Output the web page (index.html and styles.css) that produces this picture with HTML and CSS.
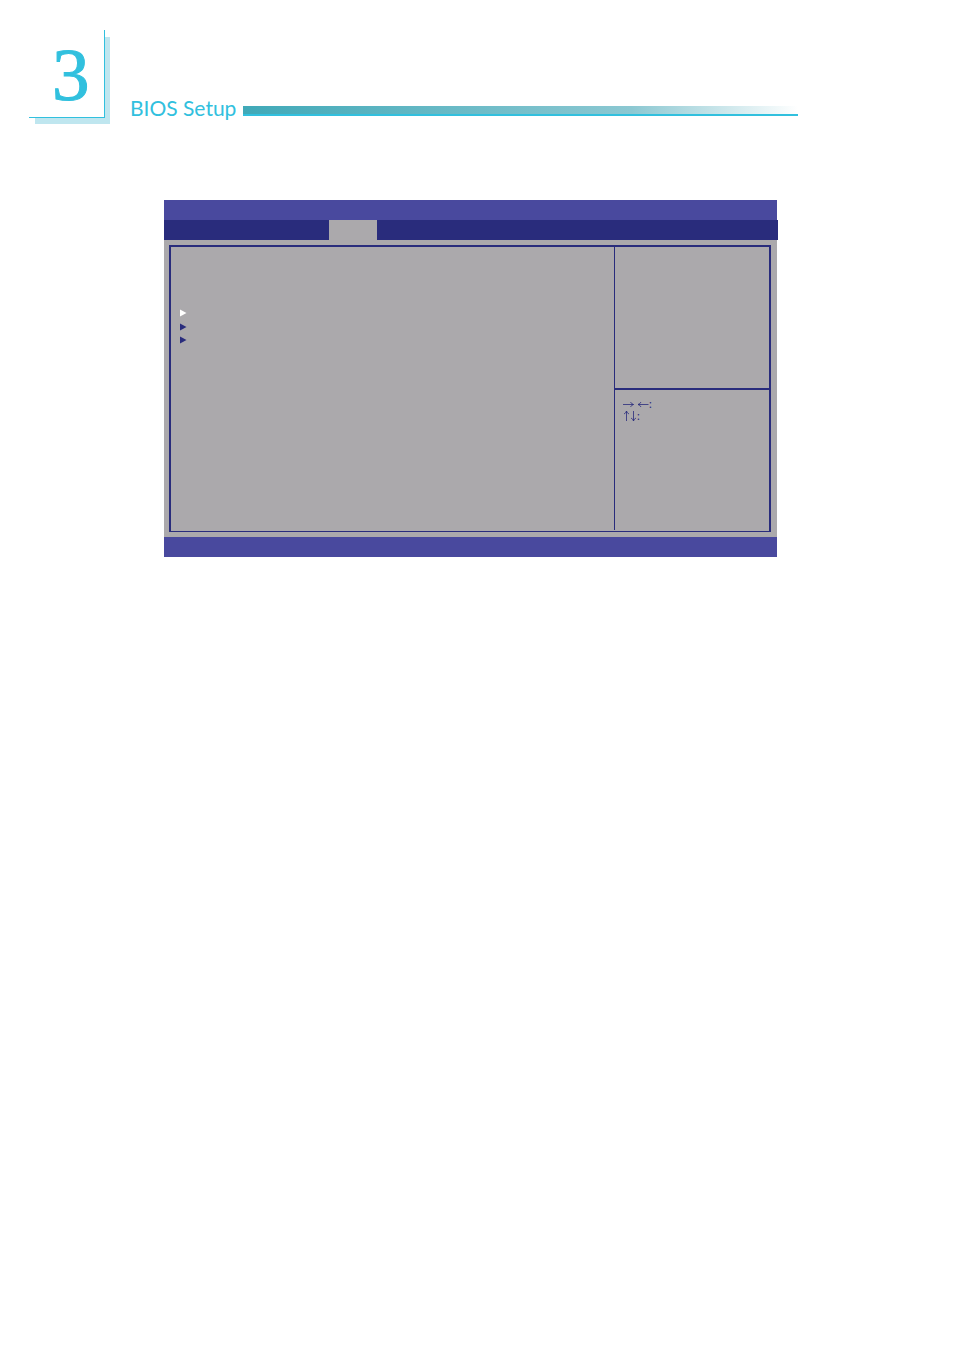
FILE: index.html
```
<!DOCTYPE html>
<html lang="en">
<head>
    <meta charset="UTF-8">
    <meta name="viewport" content="width=device-width, initial-scale=1.0">
    <title>BIOS Setup</title>
    <link rel="stylesheet" href="styles.css">
</head>
<body>
    <header class="page-header">
        <div class="chapter">3</div>
        <h1 class="title">BIOS Setup</h1>
        <div class="rule"></div>
    </header>

    <main class="bios">
        <div class="title-bar"></div>
        <div class="tab-bar">
            <div class="tab-active"></div>
        </div>
        <div class="bios-body">
            <div class="panel">
                <ul class="menu">
                    <li class="menu-item selected"><svg class="marker" viewBox="0 0 7 8"><path d="M0 0.5L6.5 4L0 7.5Z"/></svg></li>
                    <li class="menu-item"><svg class="marker" viewBox="0 0 7 8"><path d="M0 0.5L6.5 4L0 7.5Z"/></svg></li>
                    <li class="menu-item"><svg class="marker" viewBox="0 0 7 8"><path d="M0 0.5L6.5 4L0 7.5Z"/></svg></li>
                </ul>
                <aside class="side">
                    <div class="help"></div>
                    <div class="keys">
                        <p class="key-row">
                            <svg class="arrows" width="26" height="12" viewBox="0 0 26 12">
                                <path d="M0 6.5H10.5M7.5 4Q8.5 6 10.5 6.5Q8.5 7 7.5 9"/>
                                <path d="M25.5 6.5H15M18 4Q17 6 15 6.5Q17 7 18 9"/>
                            </svg>:
                        </p>
                        <p class="key-row">
                            <svg class="arrows" width="14" height="12" viewBox="0 0 14 12">
                                <path d="M3.5 11V1M1 4Q3 3 3.5 1Q4 3 6 4"/>
                                <path d="M10.5 1V11M8 8Q10 9 10.5 11Q11 9 13 8"/>
                            </svg>:
                        </p>
                    </div>
                </aside>
            </div>
        </div>
        <div class="footer-bar"></div>
    </main>
</body>
</html>
```
FILE: styles.css
```
* {
    margin: 0;
    padding: 0;
    box-sizing: border-box;
}

body {
    background-color: #fff;
    font-family: 'Lato', sans-serif;
}

/* Chapter heading */
.page-header {
    display: flex;
    align-items: flex-end;
    padding: 30px 156px 0 29px;
}

.chapter {
    width: 76px;
    height: 88px;
    padding-left: 23px;
    border-right: 1px solid #31c0de;
    border-bottom: 1px solid #31c0de;
    background-color: #fff;
    box-shadow: 6px 7px 0 -1px #bfe6ef, 5px 6px 0 0 #bfe6ef;
    clip-path: polygon(0 0, 100% 0, 100% 7px, 120% 7px, 120% 120%, 6px 120%, 6px 100%, 0 100%);
    color: #31c0de;
    font-family: 'Liberation Serif', serif;
    font-size: 75px;
    line-height: 90px;
    -webkit-text-stroke: 1px #31c0de;
}

.title {
    margin-left: 25px;
    color: #31c0de;
    font-size: 21px;
    font-weight: 400;
    line-height: 20px;
}

.rule {
    flex: 1;
    height: 10px;
    margin: 0 0 2px 7px;
    border-bottom: 2px solid #31c0de;
    background: linear-gradient(to right, #40a9b8, #8cc8d2 70%, #fff);
}

/* BIOS screen */
.bios {
    margin: 82px 177px 0 164px;
    background-color: #aba9ac;
}

.title-bar,
.footer-bar {
    height: 20px;
    background-color: #49499e;
}

.tab-bar {
    height: 20px;
    margin-right: -1px;
    padding-left: 165px;
    background-color: #292c7c;
}

.tab-active {
    width: 48px;
    height: 20px;
    background-color: #aba9ac;
}

.bios-body {
    padding: 5px 6px 5px 5px;
}

.panel {
    display: flex;
    min-height: 287px;
    border: 2px solid #292c7c;
    border-bottom-width: 1px;
}

.menu {
    flex: 1;
    padding: 59px 9px 0;
    list-style: none;
}

.menu-item {
    display: flex;
    align-items: center;
    height: 13px;
    color: #292c7c;
}

.menu-item.selected {
    height: 14px;
    color: #fff;
}

.marker {
    width: 7px;
    height: 8px;
    fill: currentColor;
}

.side {
    width: 155px;
    margin-bottom: 1px;
    border-left: 1px solid #292c7c;
}

.help {
    height: 143px;
    border-bottom: 2px solid #292c7c;
}

.keys {
    padding: 8px;
    color: #292c7c;
    font-size: 11px;
    line-height: 12px;
}

.key-row {
    display: flex;
    height: 12px;
}

.arrows {
    fill: none;
    stroke: currentColor;
    stroke-width: 0.8;
}
```
